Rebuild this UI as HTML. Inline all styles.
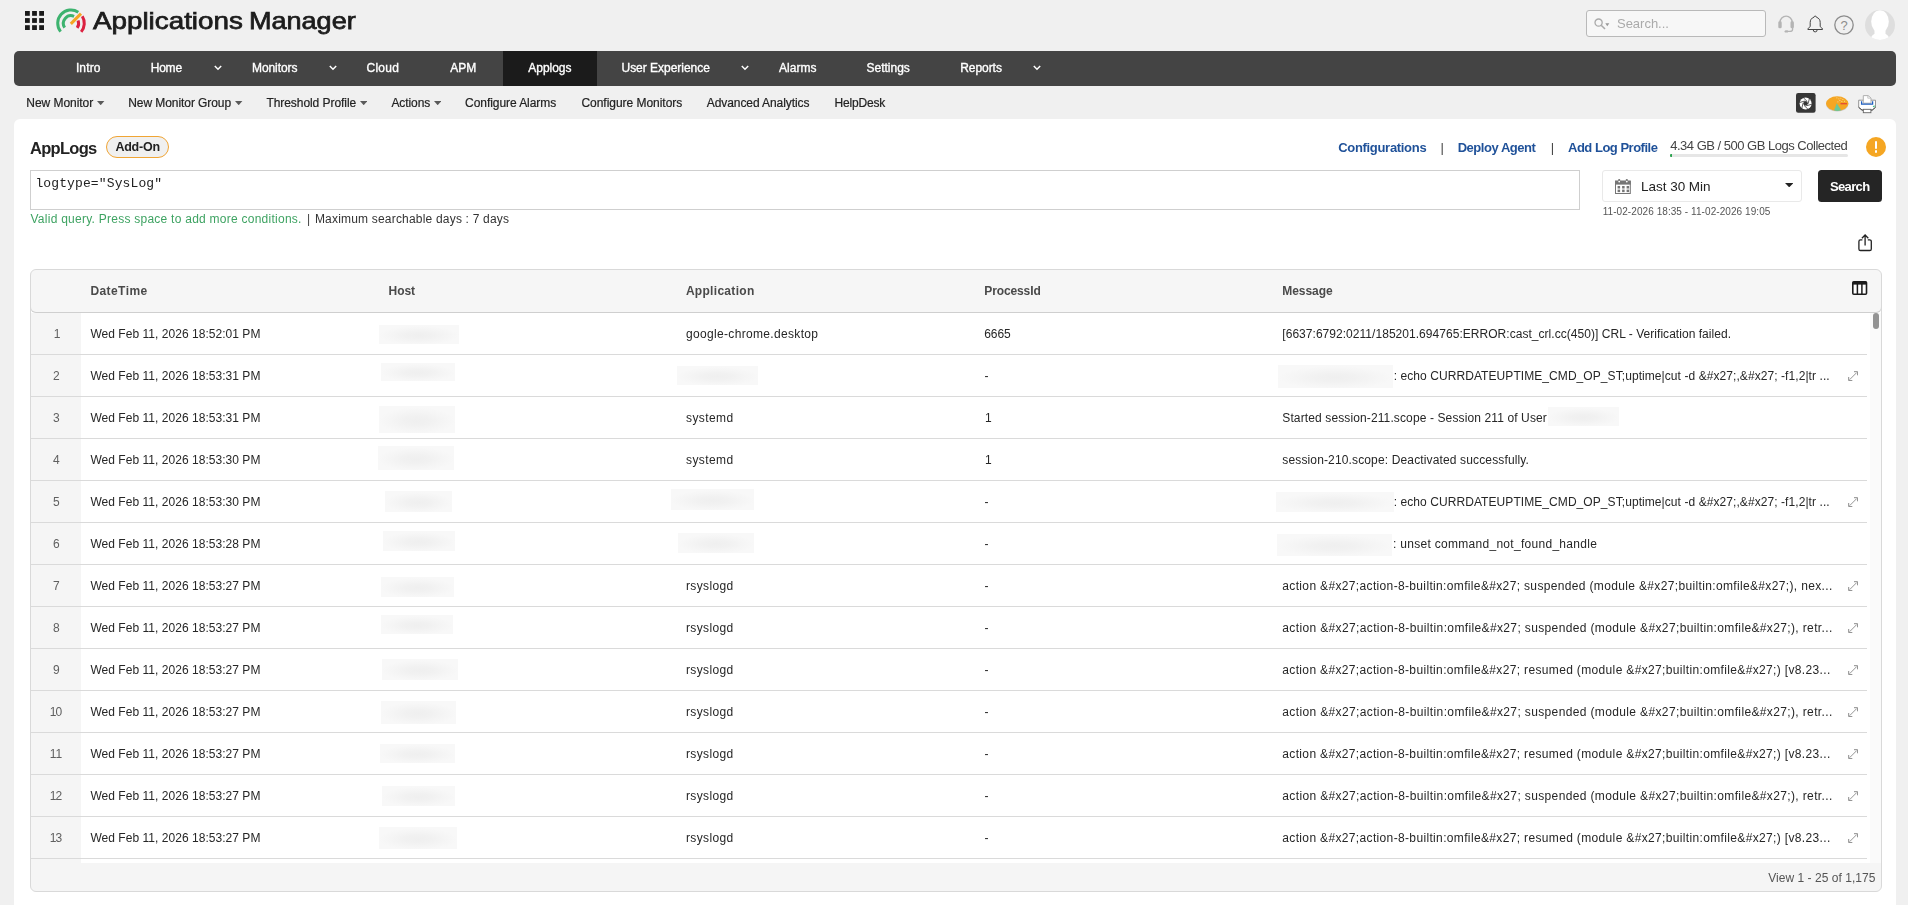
<!DOCTYPE html>
<html><head><meta charset="utf-8"><title>Applications Manager - AppLogs</title>
<style>
*{box-sizing:border-box;margin:0;padding:0}
html,body{width:1908px;height:905px;overflow:hidden}
body{background:#f0f0f0;font-family:"Liberation Sans",sans-serif;color:#222;position:relative}
#root{position:absolute;left:0;top:0;width:1908px;height:905px;overflow:hidden;will-change:transform}
#txt{position:absolute;left:0;top:0;width:1908px;height:905px;will-change:transform}
.abs{position:absolute;display:block}
.t{position:absolute;white-space:pre}
.nv{-webkit-text-stroke:.35px #fff}
.sm{-webkit-text-stroke:.2px #222}
.ttl{top:6.2px;font-size:24px;line-height:30px;color:#1c1c1c;white-space:nowrap;transform-origin:0 0;-webkit-text-stroke:.75px #1c1c1c}
#search{left:1586px;top:10px;width:180px;height:27px;border:1px solid #b9b9b9;border-radius:3px;background:#f7f7f7}
#nav{left:14px;top:51px;width:1882px;height:35px;background:#444;border-radius:5px}
#navact{left:503px;top:51px;width:94px;height:35px;background:#1b1b1b}
#panel{left:14px;top:119px;width:1882px;height:800px;background:#fff;border-radius:6px}
#addon{left:106px;top:136px;width:63px;height:22px;border:1px solid #f0a535;border-radius:11px;background:#f0f0f0}
#logbar{left:1670px;top:154px;width:177.5px;height:3px;background:#e6e6e6;border-radius:1.5px}
#logbar i{display:block;width:2px;height:3px;background:#2fa452;border-radius:1px 0 0 1px}
#query{left:30px;top:170px;width:1550px;height:40px;border:1px solid #cfcfcf;background:#fff}
#range{left:1602px;top:170px;width:200px;height:32px;border:1px solid #e9e9e9;border-radius:3px;background:#fff}
#sbtn{left:1818px;top:170px;width:64px;height:32px;background:#252525;border-radius:3.5px}
#tbl{left:30px;top:269px;width:1852px;height:623px;border:1px solid #d9d9d9;border-radius:6px;background:#f5f5f5;overflow:hidden}
#body{left:0;top:37px;width:1850px;height:555.5px;background:#fff}
#track{left:1838.5px;top:43px;width:12px;height:549.5px;background:#fafafa}
#thumb{left:1842px;top:42.7px;width:6px;height:16px;border-radius:3px;background:#939393}
#thead{left:-1px;top:-1px;width:1852px;height:44px;border:1px solid #d9d9d9;border-bottom-color:#cfcfcf;border-radius:6px;background:#f6f6f6}
.rl{position:absolute;left:0;width:1836px;height:1px;background:#dadada}
#numcol{left:0;top:43px;width:50px;height:549.5px;background:#f5f5f5}
.bl{position:absolute;background:radial-gradient(ellipse 50% 50% at 50% 55%,#efefef 0%,#f1f1f1 35%,#f5f5f5 70%,#f8f8f8 100%)}
</style></head>
<body>
<svg class="abs" style="left:25px;top:11px" width="20" height="20" viewBox="0 0 20 20" ><rect x="0.0" y="0.0" width="4.8" height="4.8" fill="#1a1a1a"/><rect x="7.1" y="0.0" width="4.8" height="4.8" fill="#1a1a1a"/><rect x="14.2" y="0.0" width="4.8" height="4.8" fill="#1a1a1a"/><rect x="0.0" y="7.1" width="4.8" height="4.8" fill="#1a1a1a"/><rect x="7.1" y="7.1" width="4.8" height="4.8" fill="#1a1a1a"/><rect x="14.2" y="7.1" width="4.8" height="4.8" fill="#1a1a1a"/><rect x="0.0" y="14.2" width="4.8" height="4.8" fill="#1a1a1a"/><rect x="7.1" y="14.2" width="4.8" height="4.8" fill="#1a1a1a"/><rect x="14.2" y="14.2" width="4.8" height="4.8" fill="#1a1a1a"/></svg>
<svg class="abs" style="left:55px;top:5.7px" width="34" height="32" viewBox="0 0 34 32" ><path d="M5.58 25.56A13.3 13.3 0 0 1 23.28 6.17" fill="none" stroke="#3db36f" stroke-width="3.0"/><path d="M9.70 21.55A7.6 7.6 0 0 1 19.09 10.36" fill="none" stroke="#3db36f" stroke-width="3.0"/><path d="M27.28 10.25A13.3 13.3 0 0 1 26.19 25.85" fill="none" stroke="#dc2140" stroke-width="3.0"/><path d="M23.05 14.45A7.6 7.6 0 0 1 22.15 21.77" fill="none" stroke="#dc2140" stroke-width="3.0"/><path d="M15.8 17.9L26 7.6" stroke="#f5a623" stroke-width="3" fill="none"/></svg>
<div id="search" class="abs"></div>
<svg class="abs" style="left:1594px;top:18px" width="17" height="12" viewBox="0 0 17 12" ><circle cx="4.6" cy="4.6" r="3.6" fill="none" stroke="#aaa" stroke-width="1.3"/><path d="M7.2 7.2L11 11" stroke="#aaa" stroke-width="1.6"/><path d="M11.3 5.2h4l-2 3z" fill="#999"/></svg>
<svg class="abs" style="left:1777.7px;top:14.4px" width="17" height="19" viewBox="0 0 17 19" ><path d="M2 10.5V8.2a6.1 6.1 0 0 1 12.2 0V10.5" fill="none" stroke="#b4b4b4" stroke-width="1.4"/><rect x="0.3" y="7.3" width="3.4" height="7" rx="1.4" fill="#b4b4b4"/><rect x="12.5" y="7.3" width="3.4" height="7" rx="1.4" fill="#b4b4b4"/><path d="M14.6 14v1.2c0 1.6-1.4 2.2-3 2.2H9" fill="none" stroke="#b4b4b4" stroke-width="1.3"/><ellipse cx="8.4" cy="17.4" rx="1.9" ry="1.2" fill="#b4b4b4"/></svg>
<svg class="abs" style="left:1806.7px;top:14.6px" width="17" height="19" viewBox="0 0 17 19" ><path d="M8.2 1.1c-.8 0-1.3.5-1.3 1.2C4.4 3 3.2 5 3.2 7.6v3.4c0 1-1.1 1.9-2.3 2.6v.9h14.6v-.9c-1.2-.7-2.3-1.6-2.3-2.6V7.6c0-2.6-1.2-4.600-3.7-5.300 0-.7-.5-1.200-1.300-1.200z" fill="none" stroke="#444" stroke-width="1.0" stroke-linejoin="round"/><path d="M6.300 15.000a1.900 1.900 0 0 0 3.800 0" fill="none" stroke="#444" stroke-width="1.0"/></svg>
<svg class="abs" style="left:1833.9px;top:14.8px" width="20" height="20" viewBox="0 0 20 20" ><circle cx="10" cy="10" r="9.2" fill="none" stroke="#8c8c8c" stroke-width="1.3"/><text x="10" y="14.6" text-anchor="middle" font-family="Liberation Sans" font-size="13" fill="#8c8c8c">?</text></svg>
<svg class="abs" style="left:1865px;top:10px" width="30" height="30" viewBox="0 0 30 30" ><defs><clipPath id="av"><circle cx="15" cy="15" r="15"/></clipPath></defs><circle cx="15" cy="15" r="15" fill="#dedede"/><g clip-path="url(#av)" fill="#fff"><ellipse cx="15" cy="11.5" rx="8.8" ry="11.3"/><path d="M5.500 31c0-5.500 3-8 9.500-8s9.500 2.500 9.500 8z"/><rect x="9.500" y="18" width="11" height="8"/></g></svg>
<div id="nav" class="abs"></div><div id="navact" class="abs"></div>
<svg class="abs" style="left:214px;top:65px" width="8" height="6" viewBox="0 0 8 6" ><path d="M0.8 1L4 4.2L7.2 1" fill="none" stroke="#fff" stroke-width="1.5"/></svg>
<svg class="abs" style="left:329px;top:65px" width="8" height="6" viewBox="0 0 8 6" ><path d="M0.8 1L4 4.2L7.2 1" fill="none" stroke="#fff" stroke-width="1.5"/></svg>
<svg class="abs" style="left:741px;top:65px" width="8" height="6" viewBox="0 0 8 6" ><path d="M0.8 1L4 4.2L7.2 1" fill="none" stroke="#fff" stroke-width="1.5"/></svg>
<svg class="abs" style="left:1033px;top:65px" width="8" height="6" viewBox="0 0 8 6" ><path d="M0.8 1L4 4.2L7.2 1" fill="none" stroke="#fff" stroke-width="1.5"/></svg>
<svg class="abs" style="left:97.19999999999999px;top:101.1px" width="7.4" height="4.2" viewBox="0 0 7.4 4.2" ><path d="M0 0H7.4L3.7 4.2z" fill="#5a5a5a"/></svg>
<svg class="abs" style="left:235.2px;top:101.1px" width="7.4" height="4.2" viewBox="0 0 7.4 4.2" ><path d="M0 0H7.4L3.7 4.2z" fill="#5a5a5a"/></svg>
<svg class="abs" style="left:360.1px;top:101.1px" width="7.4" height="4.2" viewBox="0 0 7.4 4.2" ><path d="M0 0H7.4L3.7 4.2z" fill="#5a5a5a"/></svg>
<svg class="abs" style="left:433.90000000000003px;top:101.1px" width="7.4" height="4.2" viewBox="0 0 7.4 4.2" ><path d="M0 0H7.4L3.7 4.2z" fill="#5a5a5a"/></svg>
<svg class="abs" style="left:1796.3px;top:92.9px" width="20" height="20" viewBox="0 0 20 20" ><rect x="0" y="0" width="19.6" height="19.8" rx="2.2" fill="#363636"/><circle cx="9.6" cy="10.4" r="6" fill="#fff"/><path d="M12.06 10.83L13.42 5.51" stroke="#363636" stroke-width=".8"/><path d="M10.46 12.75L15.74 11.26" stroke="#363636" stroke-width=".8"/><path d="M7.99 12.32L11.92 16.15" stroke="#363636" stroke-width=".8"/><path d="M7.14 9.97L5.78 15.29" stroke="#363636" stroke-width=".8"/><path d="M8.74 8.05L3.46 9.54" stroke="#363636" stroke-width=".8"/><path d="M11.21 8.48L7.28 4.65" stroke="#363636" stroke-width=".8"/><polygon points="12.06,10.83 10.46,12.75 7.99,12.32 7.14,9.97 8.74,8.05 11.21,8.48" fill="#363636"/></svg>
<svg class="abs" style="left:1825.7px;top:95.6px" width="23" height="16" viewBox="0 0 23 16" ><ellipse cx="11.2" cy="8.3" rx="11.2" ry="7.300" fill="#c9c9c9"/><ellipse cx="11.2" cy="7.6" rx="11.2" ry="7.300" fill="#f5a623"/><path d="M10.800 7.300l-2.800 7.200c2.300.6 5.300.5 7.200-.300z" fill="#6cc79a"/><rect x="14.5" y="7.200" width="6.500" height="1.100" fill="#e03a3a"/><g fill="#fff" opacity=".8"><rect x="10.5" y="1.500" width=".8" height=".8"/><rect x="12.5" y="2.500" width=".8" height=".8"/><rect x="14.500" y="1.800" width=".8" height=".8"/><rect x="13.500" y="4" width=".8" height=".8"/><rect x="16.500" y="3.200" width=".8" height=".8"/><rect x="15.500" y="5.200" width=".8" height=".8"/><rect x="18" y="4.800" width=".8" height=".8"/><rect x="11.500" y="5.500" width=".8" height=".8"/></g></svg>
<svg class="abs" style="left:1857.6px;top:94.6px" width="19" height="19" viewBox="0 0 19 19" ><path d="M0.700 5.200h16.800v7.300l-3.300 2.600H4L.7 12.500z" fill="#fff" stroke="#8a8a8a" stroke-width=".9"/><path d="M0.700 12.300l3.300 2.800h10.200l3.300-2.800" fill="none" stroke="#4a4a4a" stroke-width="1"/><path d="M5.300 8.200V0.600h4.800l2.900 2.400V8.200z" fill="#fff" stroke="#a8a8a8" stroke-width=".9"/><path d="M9.800 0.700v2.500h3" fill="none" stroke="#bbb" stroke-width=".8"/><path d="M3.600 6.200v3h11V6.200" fill="none" stroke="#1f5fc0" stroke-width="1.300"/><rect x="5.300" y="14.300" width="7.600" height="3.400" fill="#fff" stroke="#666" stroke-width=".9"/><path d="M14.600 11l1.400 1.600 1.100-2.200z" fill="#2bb673"/></svg>
<div id="panel" class="abs"></div>
<div id="addon" class="abs"></div>
<div id="logbar" class="abs"><i></i></div>
<div class="abs" style="left:1866px;top:137px;width:20px;height:20px;border-radius:50%;background:#f5a623"><i class="abs" style="left:8.9px;top:4px;width:2.2px;height:8px;background:#fff;border-radius:1px"></i><i class="abs" style="left:8.8px;top:13.400px;width:2.400px;height:2.400px;background:#fff;border-radius:50%"></i></div>
<div id="query" class="abs"></div>
<div id="range" class="abs"></div>
<svg class="abs" style="left:1614.6px;top:179px" width="17" height="15" viewBox="0 0 17 15" ><rect x=".5" y="2.200" width="14.800" height="12.300" fill="#fff" stroke="#757575" stroke-width="1"/><rect x="0" y="1.700" width="15.800" height="3.900" fill="#757575"/><rect x="3.200" y="0" width="2" height="2.600" rx=".8" fill="#757575"/><rect x="10.800" y="0" width="2" height="2.600" rx=".8" fill="#757575"/><circle cx="4.200" cy="2.600" r=".9" fill="#fff"/><circle cx="11.800" cy="2.600" r=".9" fill="#fff"/><rect x="2.6" y="7.0" width="2.500" height="2.500" fill="#757575"/><rect x="7.1" y="7.0" width="2.500" height="2.500" fill="#757575"/><rect x="11.6" y="7.0" width="2.500" height="2.500" fill="#757575"/><rect x="2.6" y="10.6" width="2.500" height="2.500" fill="#757575"/><rect x="7.1" y="10.6" width="2.500" height="2.500" fill="#757575"/><rect x="11.6" y="10.6" width="2.500" height="2.500" fill="#757575"/></svg>
<svg class="abs" style="left:1784.8px;top:183px" width="8.4" height="4.3" viewBox="0 0 8.4 4.3" ><path d="M0 0H8.4L4.2 4.3z" fill="#222"/></svg>
<div id="sbtn" class="abs"></div>
<svg class="abs" style="left:1857.8px;top:233.6px" width="15" height="18" viewBox="0 0 15 18" ><path d="M4.400 5.800H2.500a1.600 1.600 0 0 0-1.600 1.600v7.500a1.600 1.600 0 0 0 1.600 1.600h9.200a1.600 1.600 0 0 0 1.600-1.600V7.400a1.600 1.600 0 0 0-1.600-1.600H9.800" fill="none" stroke="#222" stroke-width="1.3"/><path d="M7.100 11.500V1.200M3.900 4.200L7.100 1l3.200 3.200" fill="none" stroke="#222" stroke-width="1.3"/></svg>
<div id="tbl" class="abs"><div id="body" class="abs"></div><div id="numcol" class="abs"></div><div id="track" class="abs"></div><div id="thumb" class="abs"></div><div id="thead" class="abs"></div><i class="rl" style="top:84px"></i><i class="rl" style="top:126px"></i><i class="rl" style="top:168px"></i><i class="rl" style="top:210px"></i><i class="rl" style="top:252px"></i><i class="rl" style="top:294px"></i><i class="rl" style="top:336px"></i><i class="rl" style="top:378px"></i><i class="rl" style="top:420px"></i><i class="rl" style="top:462px"></i><i class="rl" style="top:504px"></i><i class="rl" style="top:546px"></i><i class="rl" style="top:588px"></i></div>
<svg class="abs" style="left:1851.9px;top:281.3px" width="16" height="14" viewBox="0 0 16 14" ><rect x=".8" y=".8" width="13.700" height="12.400" rx="1" fill="#fff" stroke="#1c1c1c" stroke-width="1.600"/><rect x=".8" y=".8" width="13.700" height="2.800" fill="#1c1c1c"/><path d="M5.400 3v10M9.900 3v10" stroke="#1c1c1c" stroke-width="1.500"/></svg>
<i class="bl" style="left:379.1px;top:324.7px;width:79.9px;height:19.1px"></i>
<i class="bl" style="left:381.0px;top:362.9px;width:73.8px;height:17.8px"></i>
<i class="bl" style="left:379.1px;top:405.9px;width:75.7px;height:27.0px"></i>
<i class="bl" style="left:378.1px;top:445.7px;width:75.8px;height:24.8px"></i>
<i class="bl" style="left:385.1px;top:490.9px;width:66.9px;height:21.0px"></i>
<i class="bl" style="left:383.2px;top:531.0px;width:71.6px;height:19.7px"></i>
<i class="bl" style="left:381.0px;top:576.8px;width:72.9px;height:19.8px"></i>
<i class="bl" style="left:381.0px;top:615.0px;width:71.9px;height:19.1px"></i>
<i class="bl" style="left:382.0px;top:658.6px;width:76.0px;height:21.4px"></i>
<i class="bl" style="left:381.0px;top:701.0px;width:74.8px;height:22.9px"></i>
<i class="bl" style="left:380.0px;top:743.9px;width:74.8px;height:19.1px"></i>
<i class="bl" style="left:382.0px;top:786.0px;width:72.8px;height:20.0px"></i>
<i class="bl" style="left:379.1px;top:826.7px;width:77.7px;height:22.3px"></i>
<i class="bl" style="left:677.0px;top:366.0px;width:80.9px;height:18.9px"></i>
<i class="bl" style="left:670.9px;top:489.0px;width:83.0px;height:20.8px"></i>
<i class="bl" style="left:677.9px;top:532.9px;width:76.0px;height:20.0px"></i>
<i class="bl" style="left:1277.7px;top:365.0px;width:115.4px;height:22.7px"></i>
<i class="bl" style="left:1276.0px;top:492.3px;width:118.0px;height:19.7px"></i>
<i class="bl" style="left:1277.0px;top:533.9px;width:115.0px;height:21.7px"></i>
<i class="bl" style="left:1548.1px;top:406.9px;width:70.9px;height:18.8px"></i>
<svg class="abs" style="left:1847.9px;top:370.8px" width="10.3" height="10.3" viewBox="0 0 10.3 10.3" ><path d="M1.600 8.700L8.700 1.600" fill="none" stroke="#8a8a8a" stroke-width=".9"/><path d="M6 .7h3.600v3.600M.7 6v3.600h3.600" fill="none" stroke="#8a8a8a" stroke-width="1"/></svg>
<svg class="abs" style="left:1847.9px;top:496.8px" width="10.3" height="10.3" viewBox="0 0 10.3 10.3" ><path d="M1.600 8.700L8.700 1.600" fill="none" stroke="#8a8a8a" stroke-width=".9"/><path d="M6 .7h3.600v3.600M.7 6v3.600h3.600" fill="none" stroke="#8a8a8a" stroke-width="1"/></svg>
<svg class="abs" style="left:1847.9px;top:580.8px" width="10.3" height="10.3" viewBox="0 0 10.3 10.3" ><path d="M1.600 8.700L8.700 1.600" fill="none" stroke="#8a8a8a" stroke-width=".9"/><path d="M6 .7h3.600v3.600M.7 6v3.600h3.600" fill="none" stroke="#8a8a8a" stroke-width="1"/></svg>
<svg class="abs" style="left:1847.9px;top:622.8px" width="10.3" height="10.3" viewBox="0 0 10.3 10.3" ><path d="M1.600 8.700L8.700 1.600" fill="none" stroke="#8a8a8a" stroke-width=".9"/><path d="M6 .7h3.600v3.600M.7 6v3.600h3.600" fill="none" stroke="#8a8a8a" stroke-width="1"/></svg>
<svg class="abs" style="left:1847.9px;top:664.8px" width="10.3" height="10.3" viewBox="0 0 10.3 10.3" ><path d="M1.600 8.700L8.700 1.600" fill="none" stroke="#8a8a8a" stroke-width=".9"/><path d="M6 .7h3.600v3.600M.7 6v3.600h3.600" fill="none" stroke="#8a8a8a" stroke-width="1"/></svg>
<svg class="abs" style="left:1847.9px;top:706.8px" width="10.3" height="10.3" viewBox="0 0 10.3 10.3" ><path d="M1.600 8.700L8.700 1.600" fill="none" stroke="#8a8a8a" stroke-width=".9"/><path d="M6 .7h3.600v3.600M.7 6v3.600h3.600" fill="none" stroke="#8a8a8a" stroke-width="1"/></svg>
<svg class="abs" style="left:1847.9px;top:748.8px" width="10.3" height="10.3" viewBox="0 0 10.3 10.3" ><path d="M1.600 8.700L8.700 1.600" fill="none" stroke="#8a8a8a" stroke-width=".9"/><path d="M6 .7h3.600v3.600M.7 6v3.600h3.600" fill="none" stroke="#8a8a8a" stroke-width="1"/></svg>
<svg class="abs" style="left:1847.9px;top:790.8px" width="10.3" height="10.3" viewBox="0 0 10.3 10.3" ><path d="M1.600 8.700L8.700 1.600" fill="none" stroke="#8a8a8a" stroke-width=".9"/><path d="M6 .7h3.600v3.600M.7 6v3.600h3.600" fill="none" stroke="#8a8a8a" stroke-width="1"/></svg>
<svg class="abs" style="left:1847.9px;top:832.8px" width="10.3" height="10.3" viewBox="0 0 10.3 10.3" ><path d="M1.600 8.700L8.700 1.600" fill="none" stroke="#8a8a8a" stroke-width=".9"/><path d="M6 .7h3.600v3.600M.7 6v3.600h3.600" fill="none" stroke="#8a8a8a" stroke-width="1"/></svg>
<div id="txt">
<div class="abs ttl" style="left:93px;transform:scaleX(1.158)">Applications</div><div class="abs ttl" style="left:249.1px;transform:scaleX(1.126)">Manager</div>
<span class="t nv" style="left:75.90px;top:60px;line-height:16px;color:#fff;font-family:'Liberation Sans',sans-serif;font-size:12px;letter-spacing:0.141px;">Intro</span>
<span class="t nv" style="left:150.70px;top:60px;line-height:16px;color:#fff;font-family:'Liberation Sans',sans-serif;font-size:12px;letter-spacing:-0.212px;">Home</span>
<span class="t nv" style="left:252.00px;top:60px;line-height:16px;color:#fff;font-family:'Liberation Sans',sans-serif;font-size:12px;letter-spacing:-0.073px;">Monitors</span>
<span class="t nv" style="left:366.50px;top:60px;line-height:16px;color:#fff;font-family:'Liberation Sans',sans-serif;font-size:12px;letter-spacing:0.255px;">Cloud</span>
<span class="t nv" style="left:450.20px;top:60px;line-height:16px;color:#fff;font-family:'Liberation Sans',sans-serif;font-size:12px;">APM</span>
<span class="t nv" style="left:528.30px;top:60px;line-height:16px;color:#fff;font-family:'Liberation Sans',sans-serif;font-size:12px;letter-spacing:-0.044px;">Applogs</span>
<span class="t nv" style="left:621.50px;top:60px;line-height:16px;color:#fff;font-family:'Liberation Sans',sans-serif;font-size:12px;letter-spacing:-0.024px;">User Experience</span>
<span class="t nv" style="left:779.10px;top:60px;line-height:16px;color:#fff;font-family:'Liberation Sans',sans-serif;font-size:12px;letter-spacing:0.013px;">Alarms</span>
<span class="t nv" style="left:866.60px;top:60px;line-height:16px;color:#fff;font-family:'Liberation Sans',sans-serif;font-size:12px;letter-spacing:-0.023px;">Settings</span>
<span class="t nv" style="left:960.20px;top:60px;line-height:16px;color:#fff;font-family:'Liberation Sans',sans-serif;font-size:12px;letter-spacing:-0.053px;">Reports</span>
<span class="t sm" style="left:26.30px;top:95px;line-height:16px;color:#222;font-family:'Liberation Sans',sans-serif;font-size:12px;letter-spacing:-0.046px;">New Monitor</span>
<span class="t sm" style="left:128.20px;top:95px;line-height:16px;color:#222;font-family:'Liberation Sans',sans-serif;font-size:12px;letter-spacing:-0.067px;">New Monitor Group</span>
<span class="t sm" style="left:266.40px;top:95px;line-height:16px;color:#222;font-family:'Liberation Sans',sans-serif;font-size:12px;letter-spacing:-0.058px;">Threshold Profile</span>
<span class="t sm" style="left:391.40px;top:95px;line-height:16px;color:#222;font-family:'Liberation Sans',sans-serif;font-size:12px;letter-spacing:-0.075px;">Actions</span>
<span class="t sm" style="left:465.10px;top:95px;line-height:16px;color:#222;font-family:'Liberation Sans',sans-serif;font-size:12px;letter-spacing:-0.067px;">Configure Alarms</span>
<span class="t sm" style="left:581.40px;top:95px;line-height:16px;color:#222;font-family:'Liberation Sans',sans-serif;font-size:12px;letter-spacing:-0.028px;">Configure Monitors</span>
<span class="t sm" style="left:706.80px;top:95px;line-height:16px;color:#222;font-family:'Liberation Sans',sans-serif;font-size:12px;letter-spacing:-0.084px;">Advanced Analytics</span>
<span class="t sm" style="left:834.40px;top:95px;line-height:16px;color:#222;font-family:'Liberation Sans',sans-serif;font-size:12px;letter-spacing:-0.160px;">HelpDesk</span>
<span class="t " style="left:1617.00px;top:16px;line-height:16px;color:#aaa;font-family:'Liberation Sans',sans-serif;font-size:13px;letter-spacing:-0.014px;">Search...</span>
<span class="t " style="left:30.10px;top:139px;line-height:18px;color:#222;font-family:'Liberation Sans',sans-serif;font-size:16.5px;font-weight:bold;letter-spacing:-0.735px;">AppLogs</span>
<span class="t " style="left:115.40px;top:139px;line-height:16px;color:#222;font-family:'Liberation Sans',sans-serif;font-size:12.5px;font-weight:bold;letter-spacing:-0.217px;">Add-On</span>
<span class="t " style="left:1338.20px;top:140px;line-height:16px;color:#1f5199;font-family:'Liberation Sans',sans-serif;font-size:13px;font-weight:bold;letter-spacing:-0.308px;">Configurations</span>
<span class="t " style="left:1440.50px;top:140px;line-height:16px;color:#444;font-family:'Liberation Sans',sans-serif;font-size:13px;">|</span>
<span class="t " style="left:1457.70px;top:140px;line-height:16px;color:#1f5199;font-family:'Liberation Sans',sans-serif;font-size:13px;font-weight:bold;letter-spacing:-0.469px;">Deploy Agent</span>
<span class="t " style="left:1550.80px;top:140px;line-height:16px;color:#444;font-family:'Liberation Sans',sans-serif;font-size:13px;">|</span>
<span class="t " style="left:1568.00px;top:140px;line-height:16px;color:#1f5199;font-family:'Liberation Sans',sans-serif;font-size:13px;font-weight:bold;letter-spacing:-0.489px;">Add Log Profile</span>
<span class="t " style="left:1670.20px;top:138px;line-height:16px;color:#444;font-family:'Liberation Sans',sans-serif;font-size:13px;letter-spacing:-0.493px;">4.34 GB / 500 GB Logs Collected</span>
<span class="t " style="left:35.40px;top:176px;line-height:16px;color:#222;font-family:'Liberation Mono',monospace;font-size:13px;letter-spacing:0.125px;">logtype=&quot;SysLog&quot;</span>
<span class="t " style="left:30.50px;top:211px;line-height:16px;color:#3ea362;font-family:'Liberation Sans',sans-serif;font-size:12px;letter-spacing:0.253px;">Valid query. Press space to add more conditions.</span>
<span class="t " style="left:307.00px;top:211px;line-height:16px;color:#444;font-family:'Liberation Sans',sans-serif;font-size:12px;">|</span>
<span class="t " style="left:314.90px;top:211px;line-height:16px;color:#333;font-family:'Liberation Sans',sans-serif;font-size:12px;letter-spacing:0.194px;">Maximum searchable days : 7 days</span>
<span class="t " style="left:1641.10px;top:178px;line-height:18px;color:#222;font-family:'Liberation Sans',sans-serif;font-size:13.5px;letter-spacing:-0.038px;">Last 30 Min</span>
<span class="t " style="left:1830.00px;top:179px;line-height:16px;color:#fff;font-family:'Liberation Sans',sans-serif;font-size:13px;font-weight:bold;letter-spacing:-0.644px;">Search</span>
<span class="t " style="left:1602.70px;top:205px;line-height:14px;color:#555;font-family:'Liberation Sans',sans-serif;font-size:10px;letter-spacing:0.069px;">11-02-2026 18:35 - 11-02-2026 19:05</span>
<span class="t " style="left:90.40px;top:283px;line-height:16px;color:#4a4a4a;font-family:'Liberation Sans',sans-serif;font-size:12px;font-weight:bold;letter-spacing:0.425px;">DateTime</span>
<span class="t " style="left:388.50px;top:283px;line-height:16px;color:#4a4a4a;font-family:'Liberation Sans',sans-serif;font-size:12px;font-weight:bold;letter-spacing:-0.023px;">Host</span>
<span class="t " style="left:685.90px;top:283px;line-height:16px;color:#4a4a4a;font-family:'Liberation Sans',sans-serif;font-size:12px;font-weight:bold;letter-spacing:0.300px;">Application</span>
<span class="t " style="left:984.30px;top:283px;line-height:16px;color:#4a4a4a;font-family:'Liberation Sans',sans-serif;font-size:12px;font-weight:bold;letter-spacing:-0.117px;">ProcessId</span>
<span class="t " style="left:1282.30px;top:283px;line-height:16px;color:#4a4a4a;font-family:'Liberation Sans',sans-serif;font-size:12px;font-weight:bold;letter-spacing:-0.054px;">Message</span>
<span class="t " style="left:53.70px;top:326px;line-height:16px;color:#606060;font-family:'Liberation Sans',sans-serif;font-size:12px;">1</span>
<span class="t " style="left:90.40px;top:326px;line-height:16px;color:#262626;font-family:'Liberation Sans',sans-serif;font-size:12px;letter-spacing:0.037px;">Wed Feb 11, 2026 18:52:01 PM</span>
<span class="t " style="left:686.00px;top:326px;line-height:16px;color:#262626;font-family:'Liberation Sans',sans-serif;font-size:12px;letter-spacing:0.328px;">google-chrome.desktop</span>
<span class="t " style="left:984.30px;top:326px;line-height:16px;color:#262626;font-family:'Liberation Sans',sans-serif;font-size:12px;letter-spacing:-0.107px;">6665</span>
<span class="t " style="left:1282.30px;top:326px;line-height:16px;color:#262626;font-family:'Liberation Sans',sans-serif;font-size:12px;letter-spacing:0.039px;">[6637:6792:0211/185201.694765:ERROR:cast_crl.cc(450)] CRL - Verification failed.</span>
<span class="t " style="left:53.10px;top:368px;line-height:16px;color:#606060;font-family:'Liberation Sans',sans-serif;font-size:12px;">2</span>
<span class="t " style="left:90.40px;top:368px;line-height:16px;color:#262626;font-family:'Liberation Sans',sans-serif;font-size:12px;letter-spacing:0.037px;">Wed Feb 11, 2026 18:53:31 PM</span>
<span class="t " style="left:984.50px;top:368px;line-height:16px;color:#262626;font-family:'Liberation Sans',sans-serif;font-size:12px;">-</span>
<span class="t " style="left:1393.70px;top:368px;line-height:16px;color:#262626;font-family:'Liberation Sans',sans-serif;font-size:12px;letter-spacing:0.072px;">: echo CURRDATEUPTIME_CMD_OP_ST;uptime|cut -d &amp;#x27;,&amp;#x27; -f1,2|tr ...</span>
<span class="t " style="left:53.10px;top:410px;line-height:16px;color:#606060;font-family:'Liberation Sans',sans-serif;font-size:12px;">3</span>
<span class="t " style="left:90.40px;top:410px;line-height:16px;color:#262626;font-family:'Liberation Sans',sans-serif;font-size:12px;letter-spacing:0.037px;">Wed Feb 11, 2026 18:53:31 PM</span>
<span class="t " style="left:686.00px;top:410px;line-height:16px;color:#262626;font-family:'Liberation Sans',sans-serif;font-size:12px;letter-spacing:0.399px;">systemd</span>
<span class="t " style="left:985.00px;top:410px;line-height:16px;color:#262626;font-family:'Liberation Sans',sans-serif;font-size:12px;">1</span>
<span class="t " style="left:1282.30px;top:410px;line-height:16px;color:#262626;font-family:'Liberation Sans',sans-serif;font-size:12px;letter-spacing:0.119px;">Started session-211.scope - Session 211 of User</span>
<span class="t " style="left:53.10px;top:452px;line-height:16px;color:#606060;font-family:'Liberation Sans',sans-serif;font-size:12px;">4</span>
<span class="t " style="left:90.40px;top:452px;line-height:16px;color:#262626;font-family:'Liberation Sans',sans-serif;font-size:12px;letter-spacing:0.037px;">Wed Feb 11, 2026 18:53:30 PM</span>
<span class="t " style="left:686.00px;top:452px;line-height:16px;color:#262626;font-family:'Liberation Sans',sans-serif;font-size:12px;letter-spacing:0.399px;">systemd</span>
<span class="t " style="left:985.00px;top:452px;line-height:16px;color:#262626;font-family:'Liberation Sans',sans-serif;font-size:12px;">1</span>
<span class="t " style="left:1282.30px;top:452px;line-height:16px;color:#262626;font-family:'Liberation Sans',sans-serif;font-size:12px;letter-spacing:0.141px;">session-210.scope: Deactivated successfully.</span>
<span class="t " style="left:53.10px;top:494px;line-height:16px;color:#606060;font-family:'Liberation Sans',sans-serif;font-size:12px;">5</span>
<span class="t " style="left:90.40px;top:494px;line-height:16px;color:#262626;font-family:'Liberation Sans',sans-serif;font-size:12px;letter-spacing:0.037px;">Wed Feb 11, 2026 18:53:30 PM</span>
<span class="t " style="left:984.50px;top:494px;line-height:16px;color:#262626;font-family:'Liberation Sans',sans-serif;font-size:12px;">-</span>
<span class="t " style="left:1393.70px;top:494px;line-height:16px;color:#262626;font-family:'Liberation Sans',sans-serif;font-size:12px;letter-spacing:0.072px;">: echo CURRDATEUPTIME_CMD_OP_ST;uptime|cut -d &amp;#x27;,&amp;#x27; -f1,2|tr ...</span>
<span class="t " style="left:53.10px;top:536px;line-height:16px;color:#606060;font-family:'Liberation Sans',sans-serif;font-size:12px;">6</span>
<span class="t " style="left:90.40px;top:536px;line-height:16px;color:#262626;font-family:'Liberation Sans',sans-serif;font-size:12px;letter-spacing:0.037px;">Wed Feb 11, 2026 18:53:28 PM</span>
<span class="t " style="left:984.50px;top:536px;line-height:16px;color:#262626;font-family:'Liberation Sans',sans-serif;font-size:12px;">-</span>
<span class="t " style="left:1393.00px;top:536px;line-height:16px;color:#262626;font-family:'Liberation Sans',sans-serif;font-size:12px;letter-spacing:0.292px;">: unset command_not_found_handle</span>
<span class="t " style="left:53.10px;top:578px;line-height:16px;color:#606060;font-family:'Liberation Sans',sans-serif;font-size:12px;">7</span>
<span class="t " style="left:90.40px;top:578px;line-height:16px;color:#262626;font-family:'Liberation Sans',sans-serif;font-size:12px;letter-spacing:0.037px;">Wed Feb 11, 2026 18:53:27 PM</span>
<span class="t " style="left:686.00px;top:578px;line-height:16px;color:#262626;font-family:'Liberation Sans',sans-serif;font-size:12px;letter-spacing:0.356px;">rsyslogd</span>
<span class="t " style="left:984.50px;top:578px;line-height:16px;color:#262626;font-family:'Liberation Sans',sans-serif;font-size:12px;">-</span>
<span class="t " style="left:1282.30px;top:578px;line-height:16px;color:#262626;font-family:'Liberation Sans',sans-serif;font-size:12px;letter-spacing:0.347px;">action &amp;#x27;action-8-builtin:omfile&amp;#x27; suspended (module &amp;#x27;builtin:omfile&amp;#x27;), nex...</span>
<span class="t " style="left:53.10px;top:620px;line-height:16px;color:#606060;font-family:'Liberation Sans',sans-serif;font-size:12px;">8</span>
<span class="t " style="left:90.40px;top:620px;line-height:16px;color:#262626;font-family:'Liberation Sans',sans-serif;font-size:12px;letter-spacing:0.037px;">Wed Feb 11, 2026 18:53:27 PM</span>
<span class="t " style="left:686.00px;top:620px;line-height:16px;color:#262626;font-family:'Liberation Sans',sans-serif;font-size:12px;letter-spacing:0.356px;">rsyslogd</span>
<span class="t " style="left:984.50px;top:620px;line-height:16px;color:#262626;font-family:'Liberation Sans',sans-serif;font-size:12px;">-</span>
<span class="t " style="left:1282.30px;top:620px;line-height:16px;color:#262626;font-family:'Liberation Sans',sans-serif;font-size:12px;letter-spacing:0.365px;">action &amp;#x27;action-8-builtin:omfile&amp;#x27; suspended (module &amp;#x27;builtin:omfile&amp;#x27;), retr...</span>
<span class="t " style="left:53.10px;top:662px;line-height:16px;color:#606060;font-family:'Liberation Sans',sans-serif;font-size:12px;">9</span>
<span class="t " style="left:90.40px;top:662px;line-height:16px;color:#262626;font-family:'Liberation Sans',sans-serif;font-size:12px;letter-spacing:0.037px;">Wed Feb 11, 2026 18:53:27 PM</span>
<span class="t " style="left:686.00px;top:662px;line-height:16px;color:#262626;font-family:'Liberation Sans',sans-serif;font-size:12px;letter-spacing:0.356px;">rsyslogd</span>
<span class="t " style="left:984.50px;top:662px;line-height:16px;color:#262626;font-family:'Liberation Sans',sans-serif;font-size:12px;">-</span>
<span class="t " style="left:1282.30px;top:662px;line-height:16px;color:#262626;font-family:'Liberation Sans',sans-serif;font-size:12px;letter-spacing:0.348px;">action &amp;#x27;action-8-builtin:omfile&amp;#x27; resumed (module &amp;#x27;builtin:omfile&amp;#x27;) [v8.23...</span>
<span class="t " style="left:49.80px;top:704px;line-height:16px;color:#606060;font-family:'Liberation Sans',sans-serif;font-size:12px;letter-spacing:-0.974px;">10</span>
<span class="t " style="left:90.40px;top:704px;line-height:16px;color:#262626;font-family:'Liberation Sans',sans-serif;font-size:12px;letter-spacing:0.037px;">Wed Feb 11, 2026 18:53:27 PM</span>
<span class="t " style="left:686.00px;top:704px;line-height:16px;color:#262626;font-family:'Liberation Sans',sans-serif;font-size:12px;letter-spacing:0.356px;">rsyslogd</span>
<span class="t " style="left:984.50px;top:704px;line-height:16px;color:#262626;font-family:'Liberation Sans',sans-serif;font-size:12px;">-</span>
<span class="t " style="left:1282.30px;top:704px;line-height:16px;color:#262626;font-family:'Liberation Sans',sans-serif;font-size:12px;letter-spacing:0.365px;">action &amp;#x27;action-8-builtin:omfile&amp;#x27; suspended (module &amp;#x27;builtin:omfile&amp;#x27;), retr...</span>
<span class="t " style="left:49.80px;top:746px;line-height:16px;color:#606060;font-family:'Liberation Sans',sans-serif;font-size:12px;letter-spacing:-0.083px;">11</span>
<span class="t " style="left:90.40px;top:746px;line-height:16px;color:#262626;font-family:'Liberation Sans',sans-serif;font-size:12px;letter-spacing:0.037px;">Wed Feb 11, 2026 18:53:27 PM</span>
<span class="t " style="left:686.00px;top:746px;line-height:16px;color:#262626;font-family:'Liberation Sans',sans-serif;font-size:12px;letter-spacing:0.356px;">rsyslogd</span>
<span class="t " style="left:984.50px;top:746px;line-height:16px;color:#262626;font-family:'Liberation Sans',sans-serif;font-size:12px;">-</span>
<span class="t " style="left:1282.30px;top:746px;line-height:16px;color:#262626;font-family:'Liberation Sans',sans-serif;font-size:12px;letter-spacing:0.348px;">action &amp;#x27;action-8-builtin:omfile&amp;#x27; resumed (module &amp;#x27;builtin:omfile&amp;#x27;) [v8.23...</span>
<span class="t " style="left:49.80px;top:788px;line-height:16px;color:#606060;font-family:'Liberation Sans',sans-serif;font-size:12px;letter-spacing:-0.974px;">12</span>
<span class="t " style="left:90.40px;top:788px;line-height:16px;color:#262626;font-family:'Liberation Sans',sans-serif;font-size:12px;letter-spacing:0.037px;">Wed Feb 11, 2026 18:53:27 PM</span>
<span class="t " style="left:686.00px;top:788px;line-height:16px;color:#262626;font-family:'Liberation Sans',sans-serif;font-size:12px;letter-spacing:0.356px;">rsyslogd</span>
<span class="t " style="left:984.50px;top:788px;line-height:16px;color:#262626;font-family:'Liberation Sans',sans-serif;font-size:12px;">-</span>
<span class="t " style="left:1282.30px;top:788px;line-height:16px;color:#262626;font-family:'Liberation Sans',sans-serif;font-size:12px;letter-spacing:0.365px;">action &amp;#x27;action-8-builtin:omfile&amp;#x27; suspended (module &amp;#x27;builtin:omfile&amp;#x27;), retr...</span>
<span class="t " style="left:49.80px;top:830px;line-height:16px;color:#606060;font-family:'Liberation Sans',sans-serif;font-size:12px;letter-spacing:-0.974px;">13</span>
<span class="t " style="left:90.40px;top:830px;line-height:16px;color:#262626;font-family:'Liberation Sans',sans-serif;font-size:12px;letter-spacing:0.037px;">Wed Feb 11, 2026 18:53:27 PM</span>
<span class="t " style="left:686.00px;top:830px;line-height:16px;color:#262626;font-family:'Liberation Sans',sans-serif;font-size:12px;letter-spacing:0.356px;">rsyslogd</span>
<span class="t " style="left:984.50px;top:830px;line-height:16px;color:#262626;font-family:'Liberation Sans',sans-serif;font-size:12px;">-</span>
<span class="t " style="left:1282.30px;top:830px;line-height:16px;color:#262626;font-family:'Liberation Sans',sans-serif;font-size:12px;letter-spacing:0.348px;">action &amp;#x27;action-8-builtin:omfile&amp;#x27; resumed (module &amp;#x27;builtin:omfile&amp;#x27;) [v8.23...</span>
<span class="t " style="left:1768.20px;top:870px;line-height:16px;color:#555;font-family:'Liberation Sans',sans-serif;font-size:12px;letter-spacing:0.035px;">View 1 - 25 of 1,175</span>
</div>
</body></html>
